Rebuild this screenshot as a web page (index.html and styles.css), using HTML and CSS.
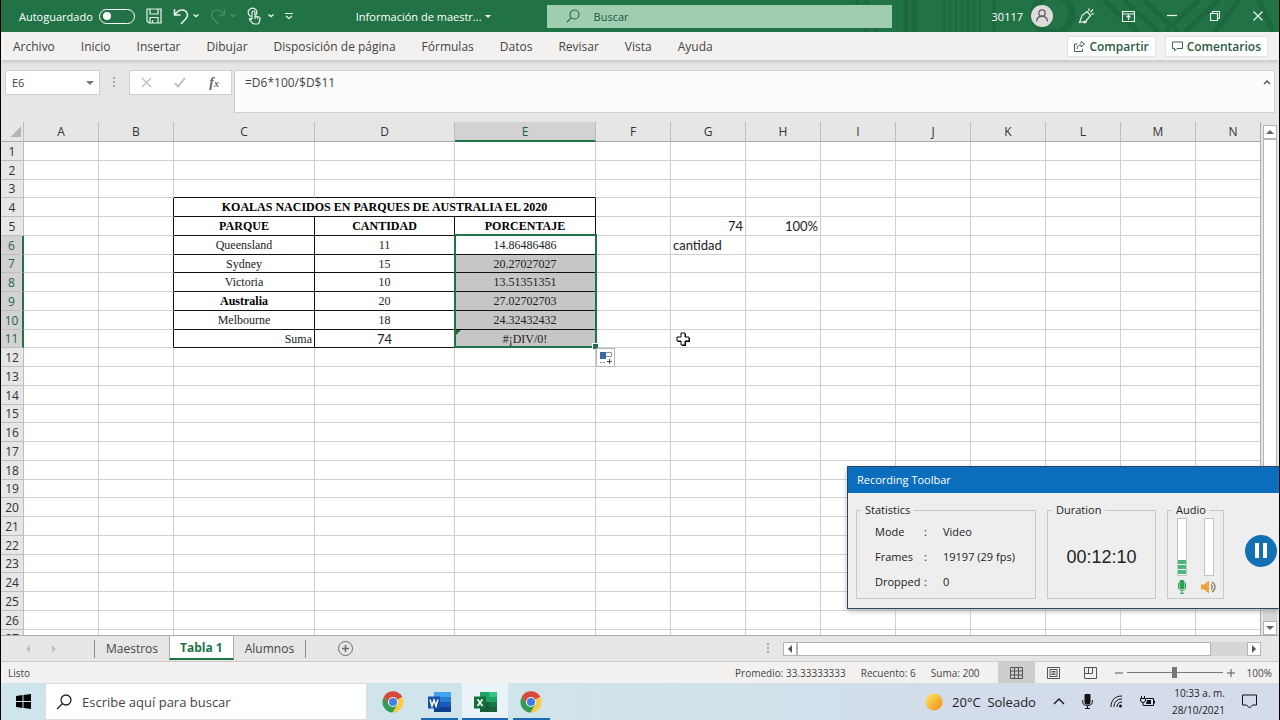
FILE: index.html
```html
<!DOCTYPE html>
<html lang="es">
<head>
    <meta charset="utf-8">
    <title>Información de maestros - Excel</title>
    <link rel="stylesheet" href="styles.css">
</head>
<body>
<header class="titlebar">
    <svg class="circuit" width="460" height="32" viewBox="0 0 460 32" fill="none" stroke="#1b613a">
        <path d="M87 0v32M95 0v32" stroke-width="5"/>
        <path d="M125 0v32M131 0v32M137 0v32M143 0v32M149 0v32M155 0v32M161 0v32" stroke-width="2"/>
        <path d="M37 0l10 32M47 0l10 32M175 0v32" stroke-width="3"/>
        <circle cx="234" cy="14" r="19" stroke-width="7"/>
        <path d="M285 0l34 32M305 0l34 32M325 0l34 32M380 0l-34 32M400 0l-34 32M420 0l-24 32M440 0l14 32" stroke-width="5"/>
    </svg>
    <label class="autosave">Autoguardado <input type="checkbox" class="toggle"></label>
    <div class="quick">
        <button aria-label="Guardar"><svg width="16" height="16" viewBox="0 0 16 16"><path d="M1 1h14v14H3l-2-2zM4 1v5h8V1M4 15V9.500h8V15M6.500 12v3"/></svg></button>
        <button aria-label="Deshacer"><svg width="26" height="18" viewBox="0 0 26 18"><path d="M1.500 2v6h6M1.500 8C4 4.500 6 3 9 3c5 0 7 5 4 8.500L8 17" stroke-width="1.500"/><path d="M20.500 7.500l2.500 2 2.500-2" stroke-width="1.500"/></svg></button>
        <button aria-label="Rehacer" class="off"><svg width="26" height="18" viewBox="0 0 26 18"><path d="M14.500 2v6h-6M14.500 8C12 4.500 10 3 7 3 2 3 0 8 3 11.500L8 17"/><path d="M20.500 7.500l2.500 2 2.500-2" stroke-width="1.500"/></svg></button>
        <button aria-label="Modo mouse/táctil"><svg width="27" height="18" viewBox="0 0 27 18"><path d="M4 9.500a4.300 4.300 0 1 1 5-1.500M5 12V5.500a1.500 1.500 0 0 1 3 0V9l4 1c1 .3 1.300 1 1 2l-.8 3.500c-.2 1-.7 1.500-1.700 1.500H7.500C5 17 4 14 2.500 12.500 2 11.500 3.500 11 5 12.500M8 9v3M10.500 10v2"/><path d="M21.500 7.500l2.500 2 2.500-2" stroke-width="1.500"/></svg></button>
        <button aria-label="Personalizar barra"><svg width="8" height="8" viewBox="0 0 8 8"><path d="M0 1.500h8M1 4l3 2.500L7 4"/></svg></button>
    </div>
    <button class="doc">Información de maestr... <span class="caret"></span></button>
    <label class="find">
        <svg width="14" height="14" viewBox="0 0 14 14" fill="none" stroke="#2a6b47" stroke-width="1.200"><circle cx="8.500" cy="5.500" r="4.500"/><path d="M5.300 8.700L1 13"/></svg>
        <input type="text" placeholder="Buscar" aria-label="Buscar">
    </label>
    <div class="account">
        <span>30117</span>
        <svg class="avatar" width="22" height="22" viewBox="0 0 22 22"><circle cx="11" cy="11" r="11" fill="#dcdcdc"/><g fill="none" stroke="#66606b" stroke-width="1.300"><circle cx="11" cy="8" r="3.200"/><path d="M5.500 16.500c.5-7 10.500-7 11 0"/></g></svg>
    </div>
    <div class="window-buttons">
        <button aria-label="Novedades"><svg width="16" height="16" viewBox="0 0 16 16"><path d="M1.500 14.500L4 7.500l5-4 3.500 4-4.500 5.500zM5 13.500c0 2 3.500 2 3.500-.8M10.500 3l.8-2.500M12.300 4.300L15 1.500M13.300 6.300l2.500-.6"/></svg></button>
        <button aria-label="Opciones de cinta"><svg width="13" height="11" viewBox="0 0 13 11"><path d="M.5.500h12v10H.5zM.5 3h12M6.500 9V4.500M4.500 6.300l2-2 2 2"/></svg></button>
        <button aria-label="Minimizar"><svg width="10" height="10" viewBox="0 0 10 10"><path d="M0 4.500h10"/></svg></button>
        <button aria-label="Restaurar"><svg width="10" height="10" viewBox="0 0 10 10"><path d="M.5 2.500h7v7h-7zM2.500 2.500V1c0-.3.200-.5.500-.5h6c.3 0 .5.200.5.500v6c0 .3-.2.500-.5.500H7.500"/></svg></button>
        <button aria-label="Cerrar"><svg width="10" height="10" viewBox="0 0 10 10"><path d="M.5.500l9 9M9.500.500l-9 9"/></svg></button>
    </div>
</header>

<nav class="ribbon">
    <a href="#">Archivo</a>
    <a href="#">Inicio</a>
    <a href="#">Insertar</a>
    <a href="#">Dibujar</a>
    <a href="#">Disposición de página</a>
    <a href="#">Fórmulas</a>
    <a href="#">Datos</a>
    <a href="#">Revisar</a>
    <a href="#">Vista</a>
    <a href="#">Ayuda</a>
    <div class="share">
        <button><svg width="11" height="11" viewBox="0 0 11 11"><path d="M3.500 3h-3v7.500h8V8M3 8c0-3 2-4 4-4V6l3.500-3L7 .5v2"/></svg>Compartir</button>
        <button><svg width="11" height="11" viewBox="0 0 11 11"><path d="M.5 1h10v6.500H5l-2.500 2.500V7.500h-2z"/></svg>Comentarios</button>
    </div>
</nav>

<section class="formula-bar">
    <div class="name-box">
        <input type="text" value="E6" aria-label="Cuadro de nombres">
        <button aria-label="Nombres"><span class="caret"></span></button>
    </div>
    <span class="dots"></span>
    <div class="fx">
        <button aria-label="Cancelar"><svg width="11" height="11" viewBox="0 0 11 11" fill="none" stroke="#bdbdbd" stroke-width="1.300"><path d="M1 1l9 9M10 1l-9 9"/></svg></button>
        <button aria-label="Introducir"><svg width="12" height="11" viewBox="0 0 12 11" fill="none" stroke="#bdbdbd" stroke-width="1.800"><path d="M1 6l3 3.500L11 1"/></svg></button>
        <button aria-label="Insertar función"><i>f<small>x</small></i></button>
    </div>
    <div class="formula">
        <textarea aria-label="Fórmula" spellcheck="false">=D6*100/$D$11</textarea>
        <button aria-label="Contraer"><svg width="8" height="6" viewBox="0 0 8 6" fill="none" stroke="#555" stroke-width="1.500"><path d="M1 5l3-3 3 3"/></svg></button>
    </div>
</section>

<main class="workbook">
    <div class="sheet">
        <table id="grid" class="grid"></table>
    </div>
    <div class="vscroll">
        <button aria-label="Subir"><span class="arrow up"></span></button>
        <div class="track"><div class="thumb"></div></div>
        <button aria-label="Bajar"><span class="arrow down"></span></button>
    </div>
</main>

<div class="tabs-row">
    <div class="tab-nav">
        <button aria-label="Anterior"><span class="arrow left"></span></button>
        <button aria-label="Siguiente"><span class="arrow right"></span></button>
    </div>
    <button class="tab first">Maestros</button>
    <button class="tab active">Tabla 1</button>
    <button class="tab last">Alumnos</button>
    <button class="add-sheet" aria-label="Hoja nueva"><svg width="15" height="15" viewBox="0 0 15 15" fill="none" stroke="#6b6b6b"><circle cx="7.500" cy="7.500" r="7"/><path d="M7.500 4v7M4 7.500h7" stroke-width="1.500"/></svg></button>
    <span class="dots small"></span>
    <div class="hscroll">
        <button aria-label="Izquierda"><span class="arrow left"></span></button>
        <div class="track"><div class="thumb"></div></div>
        <button aria-label="Derecha"><span class="arrow right"></span></button>
    </div>
</div>

<footer class="status">
    <span>Listo</span>
    <div class="sums">
        <span>Promedio: 33.33333333</span>
        <span>Recuento: 6</span>
        <span>Suma: 200</span>
    </div>
    <div class="views">
        <button class="on" aria-label="Normal"><svg width="13" height="12" viewBox="0 0 13 12"><path d="M.5.500h12v11H.5zM.5 4h12M.5 8h12M4.500.5v11M8.500.5v11"/></svg></button>
        <button aria-label="Diseño de página"><svg width="13" height="12" viewBox="0 0 13 12"><path d="M.5.500h12v11H.5zM3 2.500h7v7H3zM4.500 4.500h4M4.500 6h4M4.500 7.500h4"/></svg></button>
        <button aria-label="Salto de página"><svg width="13" height="12" viewBox="0 0 13 12"><path d="M.5.500h12v11H.5zM.5 6.500h8V.5M4.500.5v6"/></svg></button>
    </div>
    <div class="zoom">
        <button aria-label="Alejar"><svg width="8" height="8" viewBox="0 0 8 8"><path d="M0 4h8"/></svg></button>
        <input type="range" min="0" max="100" value="50" aria-label="Zoom">
        <button aria-label="Acercar"><svg width="8" height="8" viewBox="0 0 8 8"><path d="M0 4h8M4 0v8"/></svg></button>
        <span>100%</span>
    </div>
</footer>

<svg width="0" height="0" class="defs">
    <symbol id="chrome" viewBox="0 0 22 22">
        <circle cx="11" cy="11" r="10.500" fill="#fbcb45"/>
        <path d="M11 11L1.900 5.750A10.500 10.500 0 0 1 20.100 5.750z" fill="#d8483c"/>
        <path d="M11 6h9.200a10.500 10.500 0 0 0-18.300-.25L6.500 13z" fill="#d8483c"/>
        <path d="M1.900 5.750A10.500 10.500 0 0 0 10.500 21.500l4.800-8L11 15.500 6.500 13.200z" fill="#2f9c57"/>
        <circle cx="11" cy="11" r="5" fill="#f5f5f5"/>
        <circle cx="11" cy="11" r="4" fill="#3f7fe6"/>
    </symbol>
</svg>
<footer class="taskbar">
    <button class="start" aria-label="Inicio"><svg width="15" height="15" viewBox="0 0 15 15"><path d="M0 2l6.500-1v6H0zM7.500.900L15 0v7H7.500zM0 8h6.500v6L0 13zM7.500 8H15v7l-7.500-1z"/></svg></button>
    <label class="task-search">
        <svg width="16" height="16" viewBox="0 0 16 16" fill="none" stroke="#222" stroke-width="1.300"><circle cx="10" cy="6" r="5"/><path d="M6.500 9.500L1 15"/></svg>
        <input type="text" placeholder="Escribe aquí para buscar" aria-label="Escribe aquí para buscar">
    </label>
    <div class="apps">
        <button aria-label="Chrome"><svg width="22" height="22"><use href="#chrome"/></svg></button>
        <button class="open" aria-label="Word"><svg width="23" height="20" viewBox="0 0 23 20"><path d="M6 0h17v5H6z" fill="#41a5ee"/><path d="M6 5h17v5H6z" fill="#2b7cd3"/><path d="M6 10h17v5H6z" fill="#185abd"/><path d="M6 15h17v5H6z" fill="#103f91"/><path d="M0 4.500h12v12H0z" fill="#174ea6"/><path d="M2 7.500l2 6.500 2-6 2 6 2-6.500" fill="none" stroke="#fff" stroke-width="1.500"/></svg></button>
        <button class="open current" aria-label="Excel"><svg width="23" height="20" viewBox="0 0 23 20"><path d="M6 0h9v10H6z" fill="#21a366"/><path d="M15 0h8v5h-8z" fill="#33c481"/><path d="M15 5h8v5h-8z" fill="#21a366"/><path d="M6 10h9v10H6z" fill="#185c37"/><path d="M15 10h8v5h-8z" fill="#107c41"/><path d="M15 15h8v5h-8z" fill="#17613a"/><path d="M0 4.500h12v12H0z" fill="#10703b"/><path d="M3.500 7.300l5 6.700M8.500 7.300l-5 6.700" stroke="#fff" stroke-width="1.700"/></svg></button>
        <button class="open" aria-label="Chrome"><svg width="22" height="22"><use href="#chrome"/></svg></button>
    </div>
    <div class="tray">
        <svg width="18" height="18" viewBox="0 0 18 18"><defs><linearGradient id="sun" x1="0" y1="0" x2="1" y2="1"><stop offset="0.200" stop-color="#fdd654"/><stop offset="1" stop-color="#f08a12"/></linearGradient></defs><circle cx="9" cy="9" r="8.500" fill="url(#sun)"/></svg>
        <span class="weather">20°C&nbsp; Soleado</span>
        <svg class="line" width="12" height="7" viewBox="0 0 12 7"><path d="M1 6l5-5 5 5" stroke-width="1.300"/></svg>
        <svg class="line" width="11" height="15" viewBox="0 0 11 15"><rect x="3" y="0" width="5" height="10" rx="1" fill="#111"/><path d="M.7 6v2.500c0 4 9.600 4 9.600 0V6M5.500 12v2.500M3 14.500h5"/></svg>
        <svg class="line" width="13" height="13" viewBox="0 0 13 13"><path d="M1 12C1 5 5 1 12 1M4 12c0-5 3-8 8-8M7 12c0-3 2-5 5-5"/><circle cx="10.500" cy="11" r="1.500" fill="#111" stroke="none"/></svg>
        <svg class="line" width="15" height="11" viewBox="0 0 15 11"><path d="M6 2.500h7.500v7H4M14.500 4.500v3M1.500 0v2M4.500 0v2M.5 2.500h5v1.500a2.500 2.500 0 0 1-5 0zM3 6.500v3h1"/><path d="M7 4h4v4H6z" fill="#111" stroke="none"/></svg>
        <div class="clock"><span>10:33 a. m.</span><span>28/10/2021</span></div>
        <svg class="line" width="15" height="15" viewBox="0 0 15 15"><path d="M.5 1h14v10h-4L7.500 14l-3-3h-4z"/></svg>
    </div>
</footer>

<aside class="recorder">
    <h2>Recording Toolbar</h2>
    <div class="recorder-body">
        <fieldset class="stats">
            <legend>Statistics</legend>
            <dl>
                <dt>Mode</dt><dd>:</dd><dd>Video</dd>
                <dt>Frames</dt><dd>:</dd><dd>19197 (29 fps)</dd>
                <dt>Dropped</dt><dd>:</dd><dd>0</dd>
            </dl>
        </fieldset>
        <fieldset class="duration">
            <legend>Duration</legend>
            <span>00:12:10</span>
        </fieldset>
        <fieldset class="audio">
            <legend>Audio</legend>
            <div class="channel">
                <div class="meter"><i></i><i></i><i></i></div>
                <svg width="8" height="14" viewBox="0 0 8 14"><rect x="1.500" y="0" width="5" height="9" rx="1.500" fill="#2f9e4f"/><path d="M.5 3v5c0 3 7 3 7 0V3M4 10v3M2 13.300h4" fill="none" stroke="#2f9e4f"/></svg>
            </div>
            <div class="channel">
                <div class="meter"></div>
                <svg width="16" height="14" viewBox="0 0 16 14"><path d="M0 4.500h3L8 .5v13l-5-4H0z" fill="#efa23a"/><path d="M10 4.500c1.500 1.500 1.500 3.500 0 5M11 2c4 2.500 4 7.500 0 10" fill="none" stroke="#8a7c6c" stroke-width="1.300"/></svg>
            </div>
        </fieldset>
        <button class="pause" aria-label="Pause"><i></i><i></i></button>
    </div>
</aside>

<script>
    const grid = document.getElementById('grid');
    const sheet = document.querySelector('.sheet');
    const widths = { C: 'col-c', D: 'col-d', E: 'col-c' };
    const table = ['C', 'D', 'E'];

    // only as many columns and rows as the window can show
    const columns = 'ABCDEFGHIJKLMNOPQRSTUVWXYZ'.split('')
        .slice(0, Math.ceil((sheet.clientWidth - 220) / 75));
    const rowCount = Math.ceil((sheet.clientHeight - 20) / 18.75);

    const cells = {
        C5: 'PARQUE', D5: 'CANTIDAD', E5: 'PORCENTAJE',
        C6: 'Queensland', D6: '11', E6: '14.86486486',
        C7: 'Sydney', D7: '15', E7: '20.27027027',
        C8: 'Victoria', D8: '10', E8: '13.51351351',
        C9: 'Australia', D9: '20', E9: '27.02702703',
        C10: 'Melbourne', D10: '18', E10: '24.32432432',
        C11: 'Suma', D11: '74', E11: '#¡DIV/0!',
        G5: '74', H5: '100%', G6: 'cantidad'
    };
    const extra = {
        C5: 'bold', D5: 'bold', E5: 'bold', C9: 'bold',
        C11: 'end', D11: 'plain', E11: 'error', G5: 'end', H5: 'end'
    };

    function buildHead() {
        const group = document.createElement('colgroup');
        group.innerHTML = '<col class="col-head">' +
            columns.map(c => `<col class="${widths[c] || 'col'}">`).join('');
        grid.appendChild(group);
        const head = grid.createTHead();
        head.innerHTML = '<tr><th class="corner"></th>' +
            columns.map(c => `<th class="${c === 'E' ? 'picked' : ''}">${c}</th>`).join('') + '</tr>';
    }

    function classFor(col, row) {
        const names = [];
        if (table.includes(col) && row > 3 && row < 12) names.push('ink');
        if (table.includes(col) && row === 3) names.push('ink-bottom');
        if (col === 'B' && row > 3 && row < 12) names.push('ink-right');
        if (col === 'E' && row > 6 && row < 12) names.push('selected');
        if (extra[col + row]) names.push(extra[col + row]);
        return names.join(' ');
    }

    function buildBody() {
        const body = grid.createTBody();
        for (let row = 1; row <= rowCount; row++) {
            let html = `<th class="${row > 5 && row < 12 ? 'picked' : ''}">${row}</th>`;
            columns.forEach(col => {
                // C4:E4 is merged
                if (row === 4 && col === 'C') {
                    html += '<td colspan="3" class="ink bold">KOALAS NACIDOS EN PARQUES DE AUSTRALIA EL 2020</td>';
                } else if (row !== 4 || !table.includes(col)) {
                    html += `<td data-ref="${col}${row}" class="${classFor(col, row)}">${cells[col + row] || ''}</td>`;
                }
            });
            body.insertRow().innerHTML = html;
        }
    }

    function drawSelection() {
        const first = grid.querySelector('[data-ref="E6"]');
        const last = grid.querySelector('[data-ref="E11"]');
        const box = document.createElement('div');
        box.className = 'selection';
        box.style.height = last.offsetTop + last.offsetHeight - first.offsetTop + 2 + 'px';
        box.innerHTML = '<span class="handle"></span><button class="fill-options" aria-label="Opciones de autorrelleno">' +
            '<svg width="14" height="14" viewBox="0 0 14 14"><path d="M1.500 1.500h11v4h-11z" fill="#fff" stroke="#8a9099"/>' +
            '<path d="M1 1h6v7H1z" fill="#3d66a5"/><path d="M1 11.500h6" stroke="#999" stroke-dasharray="2 1"/>' +
            '<path d="M8 10.500h5M10.500 8v5" stroke="#444"/></svg></button>';
        first.appendChild(box);

        const pointer = document.createElement('div');
        pointer.className = 'pointer';
        pointer.innerHTML = '<svg width="15" height="15" viewBox="0 0 15 15"><path d="M5 1h4v4h4v4H9v4H5V9H1V5h4z" transform="translate(1 1)"/>' +
            '<path d="M5 1h4v4h4v4H9v4H5V9H1V5h4z" fill="#fff" stroke="#000"/></svg>';
        grid.querySelector('[data-ref="G11"]').appendChild(pointer);
    }

    buildHead();
    buildBody();
    drawSelection();
</script>
</body>
</html>
```
FILE: styles.css
```css
* {
    box-sizing: border-box;
}

body {
    margin: 0;
    height: 100vh;
    display: flex;
    flex-direction: column;
    position: relative;
    overflow: hidden;
    border: solid #000;
    border-width: 0 1px;
    background: #e6e6e6;
    color: #444;
    font-family: "Open Sans", "Noto Sans", sans-serif;
    font-size: 11px;
}

button,
input,
textarea {
    margin: 0;
    padding: 0;
    border: 0;
    background: none;
    color: inherit;
    font: inherit;
    outline: none;
}

button {
    display: flex;
    align-items: center;
    justify-content: center;
    flex: none;
}

svg {
    display: block;
    flex: none;
}

.defs {
    position: absolute;
}

.caret {
    border: 4px solid transparent;
    border-top-color: currentColor;
    border-bottom: 0;
}

.arrow {
    border: 4px solid transparent;
}

.up {
    border-top: 0;
    border-bottom-color: #666;
}

.down {
    border-bottom: 0;
    border-top-color: #666;
}

.left {
    border-left: 0;
    border-right-color: #555;
}

.right {
    border-right: 0;
    border-left-color: #555;
}

/* title bar */
.titlebar {
    flex: none;
    height: 32px;
    display: flex;
    align-items: center;
    position: relative;
    padding-left: 18px;
    background: #217346;
    color: #fff;
}

.circuit {
    position: absolute;
    right: 0;
    top: 0;
    opacity: 0.6;
}

.titlebar > :not(.circuit) {
    position: relative;
}

.titlebar button svg {
    fill: none;
    stroke: #e9f3ed;
    stroke-width: 1.2;
}

.autosave {
    display: flex;
    align-items: center;
    gap: 6px;
}

.toggle {
    appearance: none;
    width: 36px;
    height: 15px;
    border: 1px solid #fff;
    border-radius: 8px;
    display: flex;
    align-items: center;
    padding: 0 3px;
}

.toggle::before {
    content: "";
    width: 8px;
    height: 8px;
    border-radius: 50%;
    background: #fff;
}

.quick {
    display: flex;
    align-items: center;
    gap: 11px;
    margin-left: 11px;
}

.off {
    opacity: 0.2;
}

.doc {
    gap: 3px;
    margin-left: 63px;
}

.doc .caret {
    border-width: 3px;
    border-bottom: 0;
}

.find {
    flex: 0 1 345px;
    height: 23px;
    display: flex;
    align-items: center;
    gap: 14px;
    margin-left: 56px;
    padding-left: 19px;
    background: #9fcdb1;
}

.find input,
.task-search input {
    flex: 1;
    min-width: 0;
}

.find input::placeholder {
    color: #1c5a39;
    opacity: 1;
}

.account {
    display: flex;
    align-items: center;
    gap: 8px;
    margin-left: auto;
}

.window-buttons {
    display: flex;
    margin-left: 11px;
}

.window-buttons button {
    width: 43px;
    height: 30px;
}

/* ribbon */
.ribbon {
    flex: none;
    height: 29px;
    display: flex;
    align-items: center;
    gap: 26px;
    padding: 0 11px 0 12px;
    background: #f3f1ef;
    border-bottom: 1px solid #d0cecc;
    box-shadow: 0 1px 3px #c4c4c4;
    font-size: 12px;
}

.ribbon a {
    color: #444;
    text-decoration: none;
}

.share {
    display: flex;
    gap: 9px;
    margin-left: auto;
}

.share button {
    height: 21px;
    gap: 4px;
    padding: 0 6px;
    background: #fff;
    border: 1px solid #e4e2e0;
    color: #2b5a41;
    font-weight: 600;
}

.share svg {
    fill: none;
    stroke: #3b6650;
}

/* formula bar */
.formula-bar {
    flex: none;
    display: flex;
    align-items: flex-start;
    padding: 9px 4px 9px 4px;
}

.name-box,
.fx {
    display: flex;
    height: 25px;
    background: #fff;
    border: 1px solid #d0d0d0;
}

.name-box {
    width: 95px;
    padding: 0 5px 0 6px;
}

.name-box input {
    flex: 1;
    min-width: 0;
}

.name-box .caret {
    color: #777;
}

.dots {
    width: 2px;
    height: 11px;
    margin: 7px 14px 0 13px;
    background: repeating-linear-gradient(#aaa 0 2px, transparent 2px 4px);
}

.fx {
    width: 103px;
    margin-right: 2px;
    justify-content: space-around;
}

.fx button {
    width: 30px;
}

.fx i {
    font: italic bold 14px "Liberation Serif", serif;
    color: #666;
}

.fx small {
    font-size: 10px;
}

.formula {
    flex: 1;
    display: flex;
    align-items: flex-start;
    height: 43px;
    background: #fcfcfc;
    border: 1px solid #d0d0d0;
}

.formula textarea {
    flex: 1;
    height: 40px;
    padding: 3px 10px;
    resize: none;
    font-size: 12px;
    line-height: 18px;
}

.formula button {
    width: 14px;
    height: 21px;
}

/* sheet */
.workbook {
    flex: 1;
    min-height: 0;
    display: flex;
    border-bottom: 1px solid #ababab;
}

.sheet {
    flex: 1;
    min-width: 0;
    overflow: hidden;
    border-right: 1px solid #ababab;
}

.grid {
    table-layout: fixed;
    width: 0;
    border-spacing: 0;
    background: #fff;
}

.col-head {
    width: 23px;
}

.col {
    width: 75px;
}

.col-c {
    width: 141px;
}

.col-d {
    width: 140px;
}

.grid th {
    height: 19px;
    padding: 0;
    background: #e6e6e6;
    border: solid #bdbdbd;
    border-width: 0 1px 1px 0;
    color: #333;
    font-size: 12px;
    font-weight: 400;
    line-height: 17px;
}

.grid thead th {
    height: 20px;
    border-bottom-color: #ababab;
}

.grid td {
    height: 19px;
    padding: 0 2px;
    position: relative;
    border: solid #d0d0d0;
    border-width: 0 1px 1px 0;
    color: #222;
    font: 13px/17px Lato, sans-serif;
    white-space: nowrap;
}

/* every fourth row is a pixel shorter, as in 14.06pt rows */
.grid tbody tr:nth-child(4n + 3) > * {
    height: 18px;
    line-height: 16px;
}

.grid .picked {
    background: #d2d2d2;
    color: #1f6442;
}

.grid thead .picked {
    border-bottom: 2px solid #217346;
}

.grid tbody .picked {
    border-right: 2px solid #217346;
}

.grid .corner {
    background: linear-gradient(135deg, transparent 50%, #b4b4b4 50%) 9px 4px / 11px 11px no-repeat #e6e6e6;
}

.grid .ink {
    border-color: #111;
    text-align: center;
    font-family: "Liberation Serif", serif;
    font-size: 12px;
}

.grid .ink-bottom {
    border-bottom-color: #111;
}

.grid .ink-right {
    border-right-color: #111;
}

.grid .selected {
    background: #c6c6c6;
}

.grid .bold {
    font-weight: 700;
    color: #000;
}

.grid .end {
    text-align: right;
}

.grid .plain {
    font: 13px/17px Lato, sans-serif;
}

.error::before {
    content: "";
    position: absolute;
    left: 1px;
    top: 0;
    border-top: 5px solid #1d6b40;
    border-right: 5px solid transparent;
}

.selection {
    position: absolute;
    z-index: 1;
    top: -2px;
    left: -1px;
    right: -2px;
    border: 2px solid #217346;
}

.handle {
    position: absolute;
    right: -3px;
    bottom: -3px;
    width: 6px;
    height: 6px;
    background: #217346;
    border: solid #fff;
    border-width: 1px 0 0 1px;
}

.fill-options {
    position: absolute;
    left: 100%;
    top: 100%;
    width: 19px;
    height: 19px;
    margin: 2px 1px;
    background: #fff;
    border: 1px solid #b5b5b5;
}

.pointer {
    position: absolute;
    left: 5px;
    top: 2px;
}

/* scrollbars */
.vscroll {
    width: 18px;
    display: flex;
    flex-direction: column;
    padding: 3px 2px 0;
}

.vscroll button,
.hscroll button {
    width: 14px;
    height: 14px;
    background: #fff;
    border: 1px solid #b5b5b5;
}

.track {
    flex: 1;
    background: #d6d6d6;
}

.vscroll .thumb {
    height: 90%;
    background: #fff;
    border: 1px solid #b5b5b5;
}

.hscroll {
    display: flex;
    width: 478px;
    margin-right: 18px;
}

.hscroll .thumb {
    width: 92%;
    height: 14px;
    background: #fff;
    border: 1px solid #b5b5b5;
}

/* sheet tabs */
.tabs-row {
    flex: none;
    height: 26px;
    display: flex;
    align-items: center;
    border-bottom: 1px solid #cfcac7;
}

.tab-nav {
    display: flex;
    gap: 22px;
    width: 93px;
    padding-left: 25px;
    opacity: 0.25;
}

.tab {
    height: 18px;
    padding: 0 11px;
    font-size: 12px;
}

.first {
    border-left: 1px solid #8c8c8c;
}

.last {
    border-right: 1px solid #8c8c8c;
}

.active {
    align-self: flex-start;
    height: 24px;
    padding: 0 10px;
    background: #fff;
    border: solid #ababab;
    border-width: 0 1px;
    border-bottom: 2px solid #217346;
    color: #217346;
    font-weight: 700;
}

.add-sheet {
    margin: 0 auto 0 32px;
}

.dots.small {
    margin: 0 14px 0 0;
}

/* status bar */
.status {
    flex: none;
    height: 21px;
    display: flex;
    align-items: center;
    padding: 0 7px;
    background: #f3f1ef;
    font-size: 10px;
}

.sums {
    display: flex;
    gap: 15px;
    margin: 0 18px 0 auto;
}

.status svg {
    fill: none;
    stroke: #555;
}

.views {
    display: flex;
}

.views button {
    width: 37px;
    height: 21px;
}

.views .on {
    background: #cfcdcb;
}

.zoom {
    display: flex;
    align-items: center;
    gap: 4px;
    margin-left: 6px;
}

.zoom span {
    margin-left: 8px;
}

.zoom input {
    appearance: none;
    width: 96px;
    height: 11px;
    background: linear-gradient(#777, #777) center / 100% 1px no-repeat;
}

.zoom input::-webkit-slider-thumb {
    appearance: none;
    width: 5px;
    height: 11px;
    background: #777;
}

/* taskbar */
.taskbar {
    flex: none;
    height: 37px;
    display: flex;
    background: linear-gradient(90deg, #cfe5ec, #d0e3ea 55%, #d3dcea 75%, #d4dcea);
    color: #222;
    font-size: 13px;
}

.start {
    width: 44px;
}

.task-search {
    width: 322px;
    display: flex;
    align-items: center;
    gap: 10px;
    padding-left: 10px;
    background: #fff;
    border: 1px solid #ddd;
}

.task-search input::placeholder {
    color: #444;
    opacity: 1;
}

.apps {
    display: flex;
    margin-left: 3px;
}

.apps button {
    width: 46px;
    background: linear-gradient(#1a6bb5, #1a6bb5) center bottom / 0 2px no-repeat;
}

.apps .open {
    background-size: 37px 2px;
}

.apps .current {
    background-color: #eaf3f8;
    background-size: 100% 2px;
}

.tray {
    display: flex;
    align-items: center;
    gap: 17px;
    margin-left: auto;
    padding-right: 22px;
}

.weather {
    margin-left: -8px;
}

.line {
    fill: none;
    stroke: #111;
}

.clock {
    display: flex;
    flex-direction: column;
    align-items: flex-end;
    font-size: 10px;
    line-height: 17px;
}

/* recorder window */
.recorder {
    position: absolute;
    z-index: 2;
    right: 0;
    bottom: 111px;
    width: 432px;
    background: #eee;
    border: solid #2a4a63;
    border-width: 1px 0 1px 1px;
    box-shadow: 0 2px 5px #8889;
    color: #222;
}

.recorder h2 {
    margin: 0;
    padding: 0 9px;
    background: #0a6ebd;
    color: #fff;
    font-size: 11px;
    font-weight: 400;
    line-height: 26px;
}

.recorder-body {
    display: flex;
    align-items: center;
    gap: 11px;
    padding: 9px 2px 9px 8px;
}

.recorder fieldset {
    height: 97px;
    margin: 0;
    padding: 0;
    border: 1px solid #c8c8c8;
}

.recorder legend {
    margin-left: 4px;
    padding: 0 4px;
    line-height: 16px;
}

.stats {
    width: 180px;
}

.stats dl {
    display: grid;
    grid-template-columns: 49px 19px 1fr;
    margin: 1px 0 0 18px;
    line-height: 25px;
}

.stats dd {
    margin: 0;
}

.duration {
    width: 109px;
}

.duration span {
    display: block;
    padding-top: 28px;
    text-align: center;
    font: 18px/22px "Liberation Sans", sans-serif;
}

.audio {
    width: 57px;
}

.recorder .audio {
    display: flex;
    justify-content: space-around;
}

.channel {
    display: flex;
    flex-direction: column;
    align-items: center;
    gap: 4px;
    width: 16px;
}

.meter {
    width: 10px;
    height: 58px;
    display: flex;
    flex-direction: column;
    justify-content: flex-end;
    gap: 1px;
    padding-bottom: 1px;
    background: #fff;
    border: 1px solid #c4c4c4;
}

.meter i {
    height: 4px;
    background: #4cb57c;
}

.pause {
    gap: 4px;
    width: 32px;
    height: 32px;
    margin-left: auto;
    border-radius: 50%;
    background: #1470b4;
}

.pause i {
    width: 4px;
    height: 15px;
    background: #fff;
}
```
